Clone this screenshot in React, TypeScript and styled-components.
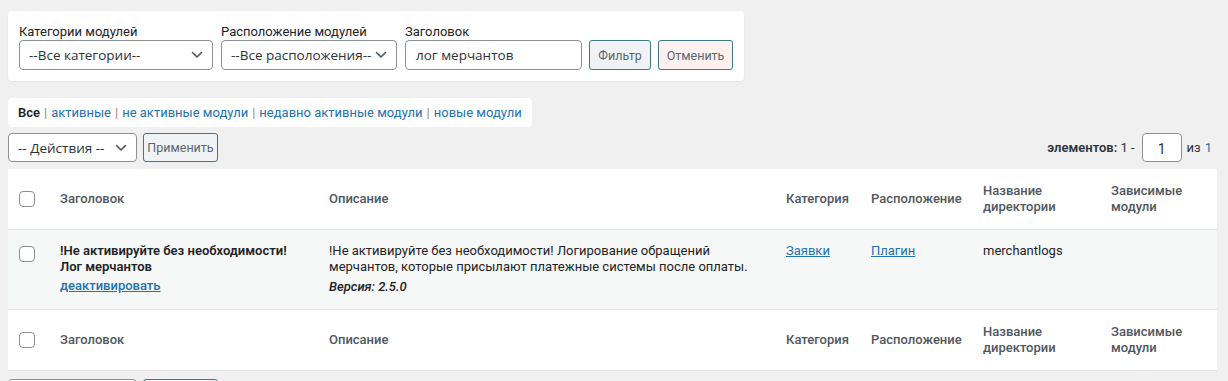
import React, { FC } from "react";
import styled, { createGlobalStyle } from "styled-components";

const GlobalStyle = createGlobalStyle`
  body {
    margin: 0;
    background: #f0f0f1;
    font-family: Roboto, "Liberation Sans", sans-serif;
    color: #1d2327;
  }
`;

const Chevron: FC = () => (
  <svg width="12" height="8" viewBox="0 0 12 8" fill="none">
    <path d="M1.5 1.5 L6 6 L10.5 1.5" stroke="#50575e" strokeWidth="1.6" strokeLinecap="round" strokeLinejoin="round" />
  </svg>
);

interface SelectProps {
  width: number;
  height?: number;
  text: string;
}

const FakeSelect: FC<SelectProps> = ({ width, height = 30, text }) => (
  <SelectBox $width={width} $height={height}>
    <span>{text}</span>
    <Chevron />
  </SelectBox>
);

const columns = [
  { title: "Заголовок" },
  { title: "Описание" },
  { title: "Категория" },
  { title: "Расположение" },
  { title: "Название директории" },
  { title: "Зависимые модули" },
];

const HeaderRow: FC<{ $top?: boolean }> = ({ $top }) => (
  <HeadRow $top={$top}>
    <CheckCell>
      <CheckBox />
    </CheckCell>
    {columns.map((c) => (
      <HeadCell key={c.title}>{c.title}</HeadCell>
    ))}
  </HeadRow>
);

export default function App() {
  return (
    <>
      <GlobalStyle />
      <Wrap>
        <FilterBox>
          <Field>
            <Label>Категории модулей</Label>
            <FakeSelect width={194} text="--Все категории--" />
          </Field>
          <Field>
            <Label>Расположение модулей</Label>
            <FakeSelect width={176} text="--Все расположения--" />
          </Field>
          <Field>
            <Label>Заголовок</Label>
            <TextInput>лог мерчантов</TextInput>
          </Field>
          <Button $width={63} $bg="#f0f3f5">Фильтр</Button>
          <Button $width={76} $bg="#fcf1ef">Отменить</Button>
        </FilterBox>

        <StatusBar>
          <Current>Все</Current>
          <Sep>|</Sep>
          <StatusLink>активные</StatusLink>
          <Sep>|</Sep>
          <StatusLink>не активные модули</StatusLink>
          <Sep>|</Sep>
          <StatusLink>недавно активные модули</StatusLink>
          <Sep>|</Sep>
          <StatusLink>новые модули</StatusLink>
        </StatusBar>

        <ActionsBar>
          <ActionsLeft>
            <FakeSelect width={129} height={29} text="-- Действия --" />
            <Button $width={75} $height={29} $bg="#f0f3f5">Применить</Button>
          </ActionsLeft>
          <Pager>
            <b>элементов:</b>&nbsp;1 -
            <PageInput>1</PageInput>
            из <PagerNum>1</PagerNum>
          </Pager>
        </ActionsBar>

        <Table>
          <HeaderRow $top />
          <BodyRow>
            <CheckCell $body>
              <CheckBox />
            </CheckCell>
            <Cell>
              <Strong>!Не активируйте без необходимости! Лог мерчантов</Strong>
              <RowLink $mt={3} $weight={500}>деактивировать</RowLink>
            </Cell>
            <Cell>
              <div>
                !Не активируйте без необходимости! Логирование обращений мерчантов, которые присылают
                платежные системы после оплаты.
              </div>
              <Version>Версия: 2.5.0</Version>
            </Cell>
            <Cell>
              <RowLink>Заявки</RowLink>
            </Cell>
            <Cell>
              <RowLink>Плагин</RowLink>
            </Cell>
            <Cell>merchantlogs</Cell>
            <Cell />
          </BodyRow>
          <HeaderRow />
        </Table>

        <ActionsBar $mt={9}>
          <ActionsLeft>
            <FakeSelect width={129} height={29} text="-- Действия --" />
            <Button $width={75} $height={29} $bg="#f0f3f5">Применить</Button>
          </ActionsLeft>
        </ActionsBar>
      </Wrap>
    </>
  );
}

const Wrap = styled.div`
  padding: 11px 11px 0 8px;
`;

const FilterBox = styled.div`
  display: flex;
  align-items: flex-end;
  gap: 7px;
  width: 736px;
  box-sizing: border-box;
  padding: 12px 11px 11px;
  background: #fff;
  border-radius: 4px;
  box-shadow: 0 1px 2px rgba(0, 0, 0, 0.05);
`;

const Field = styled.div`
  display: flex;
  flex-direction: column;
  & + & {
    margin-left: 1px;
  }
`;

const Label = styled.label`
  font-size: 13px;
  line-height: 17px;
  color: #1d2327;
`;

const SelectBox = styled.div<{ $width: number; $height: number }>`
  display: flex;
  align-items: center;
  justify-content: space-between;
  width: ${(p) => p.$width}px;
  height: ${(p) => p.$height}px;
  box-sizing: border-box;
  padding: 0 9px 0 9px;
  border: 1px solid #8c8f94;
  border-radius: 4px;
  background: #fff;
  font-family: "Open Sans", Roboto, sans-serif;
  font-size: 13.5px;
  color: #2c3338;
  white-space: nowrap;
`;

const TextInput = styled.div`
  display: flex;
  align-items: center;
  width: 177px;
  height: 30px;
  box-sizing: border-box;
  padding: 0 10px;
  border: 1px solid #8c8f94;
  border-radius: 4px;
  background: #fff;
  font-family: "Open Sans", Roboto, sans-serif;
  font-size: 13.5px;
  color: #2c3338;
`;

const Button = styled.button<{ $width: number; $height?: number; $bg: string }>`
  width: ${(p) => p.$width}px;
  height: ${(p) => p.$height ?? 30}px;
  padding: 0;
  border: 1px solid #3e7a83;
  border-radius: 3px;
  background: ${(p) => p.$bg};
  font-family: Roboto, sans-serif;
  font-size: 12.5px;
  font-weight: 400;
  color: #5a6670;
  cursor: pointer;
`;

const StatusBar = styled.div`
  display: inline-flex;
  align-items: center;
  gap: 4px;
  height: 29px;
  margin-top: 17px;
  padding: 0 10px;
  background: #fff;
  border-radius: 4px;
  font-size: 13px;
`;

const Current = styled.span`
  font-weight: 600;
  color: #1d2327;
`;

const Sep = styled.span`
  color: #a0827a;
`;

const StatusLink = styled.a`
  color: #2271b1;
  text-decoration: none;
`;

const ActionsBar = styled.div<{ $mt?: number }>`
  display: flex;
  align-items: center;
  justify-content: space-between;
  margin-top: ${(p) => p.$mt ?? 6}px;
`;

const ActionsLeft = styled.div`
  display: flex;
  gap: 6px;
`;

const Pager = styled.div`
  display: flex;
  align-items: center;
  padding-right: 5px;
  font-size: 13px;
  color: #2c3338;
  b {
    font-weight: 600;
  }
`;

const PageInput = styled.div`
  display: flex;
  align-items: center;
  justify-content: center;
  width: 40px;
  height: 29px;
  margin: 0 5px 0 7px;
  box-sizing: border-box;
  border: 1px solid #8c8f94;
  border-radius: 4px;
  background: #fff;
  padding-top: 3px;
  font-size: 14px;
`;

const PagerNum = styled.span`
  margin-left: 4px;
  color: #2271b1;
`;

const Table = styled.div`
  margin-top: 7px;
  background: #fff;
  box-shadow: 0 1px 1px rgba(0, 0, 0, 0.04);
`;

const gridCols = "42px 269px 457px 85px 112px 128px 1fr";

const HeadRow = styled.div<{ $top?: boolean }>`
  display: grid;
  grid-template-columns: ${gridCols};
  align-items: center;
  height: 60px;
  background: #fff;
  border-${(p) => (p.$top ? "bottom" : "top")}: 1px solid #e6e6e6;
`;

const HeadCell = styled.div`
  padding: 0 10px;
  font-size: 13px;
  line-height: 16px;
  font-weight: 500;
  color: #50575e;
`;

const CheckCell = styled.div<{ $body?: boolean }>`
  padding-left: 11px;
  align-self: ${(p) => (p.$body ? "start" : "center")};
  padding-top: ${(p) => (p.$body ? 16 : 0)}px;
`;

const CheckBox = styled.div`
  width: 16px;
  height: 16px;
  box-sizing: border-box;
  border: 1px solid #8c8f94;
  border-radius: 4px;
  background: #fff;
`;

const BodyRow = styled.div`
  display: grid;
  grid-template-columns: ${gridCols};
  min-height: 79px;
  background: #f6f7f7;
`;

const Cell = styled.div`
  padding: 13px 10px 10px;
  font-size: 13px;
  line-height: 16px;
  color: #1d2327;
`;

const Strong = styled.div`
  font-weight: 600;
`;

const RowLink = styled.a<{ $mt?: number; $weight?: number }>`
  display: inline-block;
  margin-top: ${(p) => p.$mt ?? 0}px;
  color: #2271b1;
  text-decoration: underline;
  font-weight: ${(p) => p.$weight ?? 400};
`;

const Version = styled.div`
  margin-top: 4px;
  font-style: italic;
  font-weight: 500;
`;
